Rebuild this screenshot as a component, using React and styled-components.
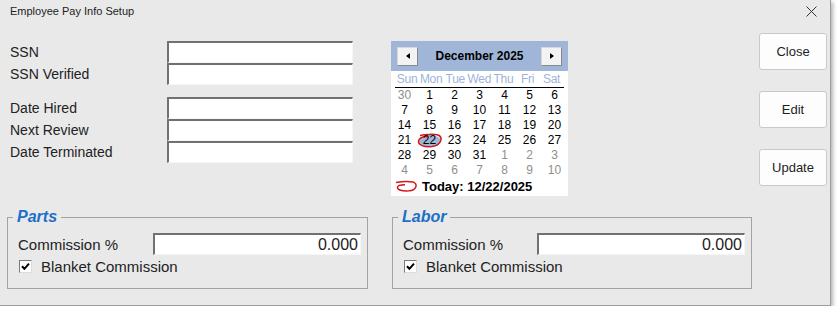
import React from 'react';
import styled, { createGlobalStyle } from 'styled-components';

const GlobalStyle = createGlobalStyle`
  html, body {
    margin: 0;
    padding: 0;
    background: #ffffff;
  }
  body {
    font-family: 'Liberation Sans', Arial, sans-serif;
  }
`;

const Window = styled.div`
  box-sizing: border-box;
  width: 831px;
  height: 306px;
  background: #e9e9e9;
  border-right: 1px solid #9c9c9c;
  border-bottom: 1px solid #9c9c9c;
  box-shadow: 2px 2px 4px rgba(0, 0, 0, 0.3);
  display: grid;
  grid-template-rows: 22px 187px auto;
  color: #1e1e1e;
`;

const TitleBar = styled.div`
  display: flex;
  align-items: center;
  justify-content: space-between;
  padding: 0 13px 0 10px;
  font-size: 11px;
  color: #222;
`;

const CloseX = styled.svg`
  width: 11px;
  height: 11px;
`;

const TopArea = styled.div`
  display: flex;
  align-items: flex-start;
  padding-left: 10px;
`;

const Form = styled.div`
  width: 343px;
  margin-top: 19px;
  display: flex;
  flex-direction: column;
  gap: 12px;
`;

const FieldGroup = styled.div`
  display: flex;
  flex-direction: column;
`;

const FieldRow = styled.div`
  display: flex;
  align-items: center;
  height: 22px;
`;

const Label = styled.span`
  width: ${p => p.$width || 157}px;
  flex-shrink: 0;
  font-size: ${p => p.$size || 14}px;
  color: #222;
  white-space: nowrap;
`;

const TextInput = styled.div`
  box-sizing: border-box;
  height: 22px;
  flex: 1;
  background: #fff;
  border-top: 2px solid #717171;
  border-left: 2px solid #717171;
  border-right: 1px solid #f6f6f6;
  border-bottom: 1px solid #f6f6f6;
  font-size: 16px;
  line-height: 19px;
  text-align: right;
  padding-right: 2px;
  color: #222;
`;

const Calendar = styled.div`
  width: 177px;
  margin: 19px 0 0 38px;
  background: #fff;
  padding-bottom: 2px;
`;

const CalHeader = styled.div`
  height: 30px;
  background: #a0b6d9;
  display: flex;
  align-items: center;
  justify-content: space-between;
  padding: 0 6px;
`;

const NavButton = styled.div`
  box-sizing: border-box;
  width: 21px;
  height: 19px;
  background: #f3f3f3;
  border: 1px solid #d8d8d8;
  border-right-color: #8a8a8a;
  border-bottom-color: #8a8a8a;
  display: flex;
  align-items: center;
  justify-content: center;
`;

const Arrow = styled.span`
  width: 0;
  height: 0;
  border-top: 3.5px solid transparent;
  border-bottom: 3.5px solid transparent;
  ${p => (p.$dir === 'left' ? 'border-right: 4px solid #000;' : 'border-left: 4px solid #000;')}
`;

const MonthTitle = styled.span`
  font-size: 12px;
  font-weight: bold;
  color: #000;
`;

const DayGrid = styled.div`
  display: grid;
  grid-template-columns: repeat(7, 25px);
  margin: 0 1px;
`;

const DayNames = styled(DayGrid)`
  height: 16px;
  align-items: center;
  border-bottom: 1px solid #000;
  margin: 0 4px;
  grid-template-columns: repeat(7, 24.1px);
`;

const DayName = styled.span`
  text-align: center;
  font-size: 12px;
  color: #9fb3d8;
  letter-spacing: -0.3px;
`;

const Day = styled.span`
  position: relative;
  height: 15px;
  line-height: 15px;
  text-align: center;
  font-size: 12px;
  color: ${p => (p.$muted ? '#8e8e8e' : '#000')};
`;

const DayText = styled.span`
  position: relative;
  z-index: 1;
`;

const SelectedMark = styled.svg`
  position: absolute;
  left: -1px;
  top: -1px;
  width: 27px;
  height: 17px;
`;

const TodayRow = styled.div`
  height: 16px;
  display: flex;
  align-items: center;
  gap: 4px;
  padding-left: 4px;
  font-size: 13px;
  font-weight: bold;
  color: #000;
`;

const ButtonColumn = styled.div`
  margin: 11px 3px 0 auto;
  display: flex;
  flex-direction: column;
  gap: 21px;
`;

const ActionButton = styled.button`
  box-sizing: border-box;
  width: 68px;
  height: 37px;
  background: #fdfdfd;
  border: 1px solid #c9c9c9;
  border-radius: 3px;
  font-family: 'Liberation Sans', Arial, sans-serif;
  font-size: 13px;
  color: #1e1e1e;
  padding: 0;
`;

const GroupsRow = styled.div`
  display: flex;
  gap: 24px;
  padding-left: 7px;
`;

const GroupBox = styled.fieldset`
  box-sizing: border-box;
  width: ${p => p.$width}px;
  height: 80px;
  margin: 0;
  min-width: 0;
  border: 1px solid #a3a3a3;
  padding: 0 6px 0 10px;
`;

const Legend = styled.legend`
  font-size: 16px;
  font-weight: bold;
  font-style: italic;
  line-height: 16px;
  color: #1b6fc8;
  padding: 0 4px;
  margin-left: -5px;
`;

const CommissionRow = styled(FieldRow)`
  margin-top: 8px;
`;

const CheckRow = styled.label`
  display: flex;
  align-items: center;
  gap: 9px;
  margin-top: 3px;
  padding-left: 1px;
  height: 16px;
  font-size: 15px;
  color: #222;
`;

const CheckBox = styled.span`
  box-sizing: border-box;
  width: 13px;
  height: 13px;
  background: #fff;
  border-top: 1px solid #7a7a7a;
  border-left: 1px solid #7a7a7a;
  border-right: 1px solid #dcdcdc;
  border-bottom: 1px solid #dcdcdc;
  display: flex;
  align-items: center;
  justify-content: center;
`;

const weeks = [
  [[30, true], 1, 2, 3, 4, 5, 6],
  [7, 8, 9, 10, 11, 12, 13],
  [14, 15, 16, 17, 18, 19, 20],
  [21, 22, 23, 24, 25, 26, 27],
  [28, 29, 30, 31, [1, true], [2, true], [3, true]],
  [[4, true], [5, true], [6, true], [7, true], [8, true], [9, true], [10, true]],
];

const dayNames = ['Sun', 'Mon', 'Tue', 'Wed', 'Thu', 'Fri', 'Sat'];

const Check = () => (
  <svg width="9" height="9" viewBox="0 0 9 9">
    <path d="M1 4.2 L3.4 6.8 L8 1.6" fill="none" stroke="#000" strokeWidth="2" />
  </svg>
);

const Group = ({ title, width, labelWidth }) => (
  <GroupBox $width={width}>
    <Legend>{title}</Legend>
    <CommissionRow>
      <Label $width={labelWidth} $size={15}>Commission %</Label>
      <TextInput>0.000</TextInput>
    </CommissionRow>
    <CheckRow>
      <CheckBox>
        <Check />
      </CheckBox>
      Blanket Commission
    </CheckRow>
  </GroupBox>
);

const App = () => {
  return (
    <>
      <GlobalStyle />
      <Window>
        <TitleBar>
          <span>Employee Pay Info Setup</span>
          <CloseX viewBox="0 0 11 11">
            <path d="M0.5 0.5 L10.5 10.5 M10.5 0.5 L0.5 10.5" stroke="#333" strokeWidth="1" />
          </CloseX>
        </TitleBar>

        <TopArea>
          <Form>
            <FieldGroup>
              <FieldRow>
                <Label>SSN</Label>
                <TextInput />
              </FieldRow>
              <FieldRow>
                <Label>SSN Verified</Label>
                <TextInput />
              </FieldRow>
            </FieldGroup>
            <FieldGroup>
              <FieldRow>
                <Label>Date Hired</Label>
                <TextInput />
              </FieldRow>
              <FieldRow>
                <Label>Next Review</Label>
                <TextInput />
              </FieldRow>
              <FieldRow>
                <Label>Date Terminated</Label>
                <TextInput />
              </FieldRow>
            </FieldGroup>
          </Form>

          <Calendar>
            <CalHeader>
              <NavButton>
                <Arrow $dir="left" />
              </NavButton>
              <MonthTitle>December 2025</MonthTitle>
              <NavButton>
                <Arrow $dir="right" />
              </NavButton>
            </CalHeader>
            <DayNames>
              {dayNames.map(n => (
                <DayName key={n}>{n}</DayName>
              ))}
            </DayNames>
            <DayGrid>
              {weeks.flat().map((d, i) => {
                const [num, muted] = Array.isArray(d) ? d : [d, false];
                const selected = !muted && num === 22;
                return (
                  <Day key={i} $muted={muted}>
                    {selected && (
                      <SelectedMark viewBox="0 0 27 17">
                        <ellipse cx="14" cy="9" rx="11" ry="6" fill="#9fb6d9" />
                        <path
                          d="M4 3.5 C9 2.2 18 2 22 3 C27 5 26 13 16 14.5 C8 15.5 2 13 2.5 9 C3 6 7 4.5 12 4.5"
                          fill="none"
                          stroke="#d11a1a"
                          strokeWidth="1.5"
                        />
                      </SelectedMark>
                    )}
                    <DayText>{num}</DayText>
                  </Day>
                );
              })}
            </DayGrid>
            <TodayRow>
              <svg width="23" height="12" viewBox="0 0 23 12">
                <path
                  d="M1 2.5 C6 1.5 14 1.2 18 2 C23 3.5 22 10 14 10.8 C7 11.3 2.5 10 2.5 7.5 C2.5 5.5 6 4.8 10 4.8"
                  fill="none"
                  stroke="#d11a1a"
                  strokeWidth="1.5"
                />
              </svg>
              Today: 12/22/2025
            </TodayRow>
          </Calendar>

          <ButtonColumn>
            <ActionButton>Close</ActionButton>
            <ActionButton>Edit</ActionButton>
            <ActionButton>Update</ActionButton>
          </ButtonColumn>
        </TopArea>

        <GroupsRow>
          <Group title="Parts" width={361} labelWidth={135} />
          <Group title="Labor" width={360} labelWidth={134} />
        </GroupsRow>
      </Window>
    </>
  );
};

export default App;
